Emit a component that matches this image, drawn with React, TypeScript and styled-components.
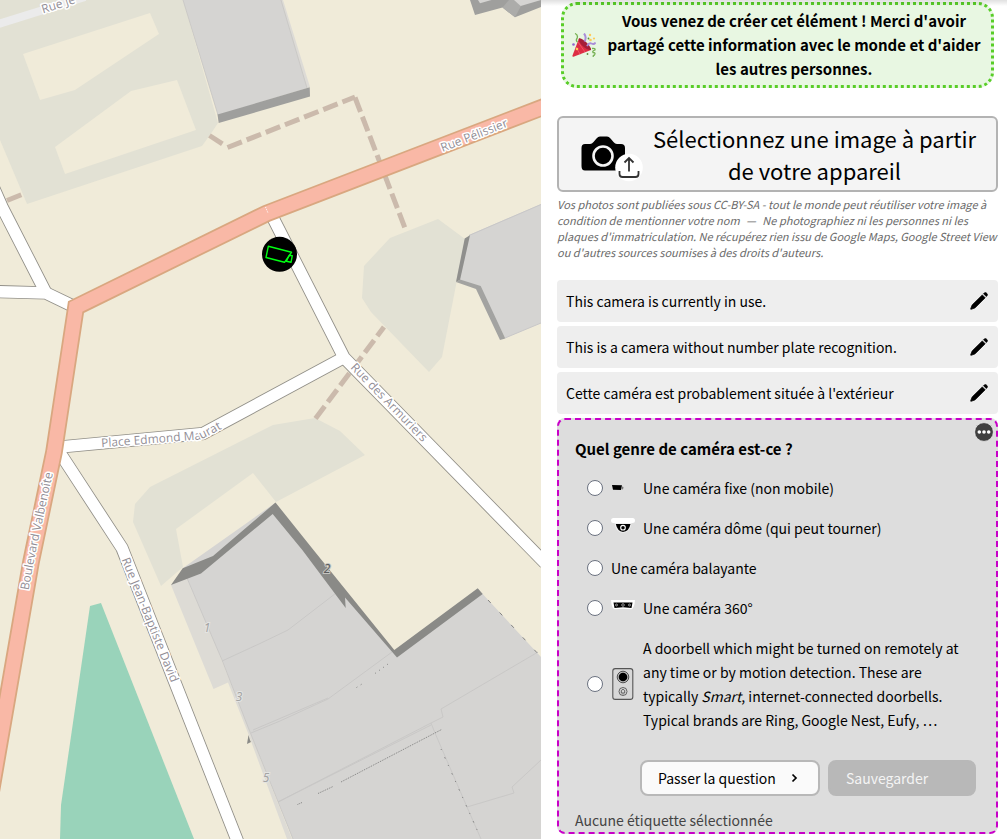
import React from "react";
import styled, { createGlobalStyle } from "styled-components";

const GlobalStyle = createGlobalStyle`
  *, *::before, *::after { box-sizing: border-box; }
  body {
    margin: 0;
    background: #fff;
    color: #000;
    font-family: "Noto Sans CJK SC", "Noto Sans", sans-serif;
    font-size: 14px;
    line-height: 24px;
  }
  button, input { font: inherit; color: inherit; margin: 0; }
  p, h2, ul { margin: 0; padding: 0; }
`;

const Page = styled.main`
  display: grid;
  grid-template-columns: 541fr 466fr;
  min-height: 100vh;
`;

const MapCanvas = styled.svg`
  display: block;
  width: 100%;
  height: 100%;
  background: #f0ebd9;
`;

const Panel = styled.section`
  position: relative;
  display: flex;
  flex-direction: column;
  min-width: 0;
  padding: 2px 9px 5px 16px;
`;

const HeaderShadow = styled.div`
  position: absolute;
  inset: 0 0 auto 0;
  height: 6px;
  background: linear-gradient(rgba(0, 0, 0, 0.12), rgba(0, 0, 0, 0));
`;

const ThanksBanner = styled.div`
  display: flex;
  align-items: center;
  gap: 8px;
  margin: 0 4px 28px;
  padding: 4px 7px 4px 8px;
  border: 3px dotted #58cd27;
  border-radius: 16px;
  background: #e8f7e2;
  font-size: 15px;
  font-weight: 700;
  text-align: center;
`;

const BannerText = styled.p`
  flex: 1;
`;

const Icon = styled.svg<{ $w: number; $h: number }>`
  flex: none;
  display: block;
  width: ${(p) => p.$w}px;
  height: ${(p) => p.$h}px;
`;

const UploadButton = styled.button`
  display: flex;
  align-items: center;
  padding: 4px 10px 4px 22px;
  border: 2px solid #b3b3b3;
  border-radius: 6px;
  background: #f4f4f4;
  font-size: 22px;
  line-height: 32px;
`;

const UploadLabel = styled.span`
  flex: 1;
`;

const Licence = styled.p`
  margin: 4px -3px 20px 0;
  color: #6a6a6a;
  font-size: 11px;
  line-height: 16px;
  font-style: italic;
`;

const Dash = styled.span`
  margin: 0 4px;
`;

const Answers = styled.ul`
  display: flex;
  flex-direction: column;
  gap: 4px;
  margin-bottom: 4px;
  list-style: none;
`;

const Answer = styled.li`
  display: flex;
  align-items: center;
  justify-content: space-between;
  padding: 9px 10px 9px 9px;
  border-radius: 4px;
  background: #eeeeee;
`;

const IconButton = styled.button`
  display: block;
  padding: 0;
  border: 0;
  background: none;
`;

const QuestionBox = styled.form`
  position: relative;
  display: flex;
  flex-direction: column;
  padding: 17px 16px 0;
  border: 2px dashed #c800c8;
  border-radius: 8px;
  background: #dddddd;
`;

const MenuButton = styled(IconButton)`
  position: absolute;
  top: 2px;
  right: 2px;
`;

const Question = styled.h2`
  margin-bottom: 7px;
  font-size: 15px;
  line-height: 24px;
  font-weight: 700;
`;

const Option = styled.label`
  display: flex;
  align-items: center;
  gap: 8px;
  padding: 8px 4px 8px 12px;
`;

const Radio = styled.input`
  flex: none;
  appearance: none;
  width: 16px;
  height: 16px;
  border: 1px solid #6b7280;
  border-radius: 50%;
  background: #fff;
`;

const Actions = styled.div`
  display: flex;
  justify-content: flex-end;
  gap: 8px;
  margin: 20px 4px 12px;
`;

const ActionButton = styled.button<{ $muted?: boolean }>`
  display: flex;
  align-items: center;
  justify-content: space-between;
  width: ${(p) => (p.$muted ? 148 : 180)}px;
  padding: 4px 16px;
  border: 2px solid #b8b8b8;
  border-radius: 8px;
  background: ${(p) => (p.$muted ? "#b8b8b8" : "#fafafa")};
  color: ${(p) => (p.$muted ? "#f4f4f4" : "#000")};
  white-space: nowrap;
`;

const TagHint = styled.p`
  color: #444;
`;

const StreetLabel = styled.text`
  font-family: "Open Sans", "Noto Sans", sans-serif;
  font-size: 12px;
  fill: #928e96;
  stroke: #fff;
  stroke-width: 3px;
  stroke-linejoin: round;
  paint-order: stroke;
`;

const HouseNumber = styled.text<{ $dark?: boolean }>`
  font-family: "Noto Sans", sans-serif;
  font-size: 12px;
  font-style: italic;
  text-anchor: middle;
  fill: ${(p) => (p.$dark ? "#5c5c5c" : "#a4a4a4")};
  stroke: ${(p) => (p.$dark ? "#c4c4c0" : "#e4e4e2")};
  stroke-width: 2px;
  paint-order: stroke;
`;

const MINOR_ROADS = [
  "M-6 189L2 207L46 293",
  "M-5 291.500L46 293L75 307",
  "M271 214L344 357.500L545 563",
  "M344 357.500L203 433.500L60 447",
  "M60 453L122 548L239 845",
];
const MAIN_ROAD = "M546 106L266.500 213.500L76 307L54 452L31 562L-12 810";

const FOOTPATHS = [
  "M209.500 135.500L224 145",
  "M227.500 147.500L355 97",
  "M355 97.500L406.500 232",
  "M7 200.500L22 194.500",
  "M315.500 418.500L384 327",
];

const ROOF_LINES = [
  "M222 661L260 643.500L288 630L340 590",
  "M251 733L280 721L328 699L392 652",
  "M253 730L328 698",
  "M278 802L431 723L443 717L441 709L538 652",
  "M278 802L431 725",
  "M431 723L435 733L467 807L481 839",
  "M467 807L514 793L512 787L541 760",
  "M187 578L222 660L248 727L293 839",
];

function CityMap() {
  return (
    <MapCanvas
      viewBox="0 0 541 839"
      preserveAspectRatio="xMidYMid slice"
      role="img"
      aria-label="Carte"
    >
      <defs>
        <path id="pelissier" d="M442.500 152L530 118" />
        <path id="maurat" d="M101.500 447.200L201 439.500L207 436.500L240 419" />
        <path id="armuriers" d="M350 368L440 460.500" />
        <path id="valbenoite" d="M28.500 590.500L36 551L60 440" />
        <path id="david" d="M121.500 559.500L190 730" />
        <path id="rueje" d="M43 13.500L100 -4.500" />
      </defs>

      <g fill="#e2e1d4">
        <path d="M0 0H183L218 123L212 132L202 146L27 204L0 140Z" />
        <path d="M390 238L438 219L465 239L457 280L442 357L429 372L371 312L362 298L364 266Z" />
        <path d="M273 425L315 418L340 431L365 455L276 502L253 473L176 529L183 567L161 586L133 522L135 504L150 487Z" />
      </g>
      <g fill="#f0ebd9">
        <path d="M23 54L150 13L159 34L75 90L40 100Z" />
        <path d="M55 147L131 91L177 80L196 130L65 174Z" />
      </g>
      <path d="M90 606L101 603L194 839H60L61 805Z" fill="#99d3ba" />
      <path d="M-5 25L85 -3" stroke="#ebebeb" strokeWidth="8" fill="none" />

      <g fill="none" stroke="#cbbaac" strokeWidth="5" strokeDasharray="15.400 5.200">
        {FOOTPATHS.map((d) => (
          <path key={d} d={d} />
        ))}
      </g>

      <g fill="none" stroke="#918f88" strokeWidth="13.200">
        {MINOR_ROADS.map((d) => (
          <path key={d} d={d} />
        ))}
      </g>
      <g fill="none" stroke="#fff" strokeWidth="11.500">
        {MINOR_ROADS.map((d) => (
          <path key={d} d={d} />
        ))}
      </g>
      <path d={MAIN_ROAD} fill="none" stroke="#d9a780" strokeWidth="17.600" />
      <path d={MAIN_ROAD} fill="none" stroke="#f9b8a6" strokeWidth="14" />
      <path d="M265.500 207L268 213" stroke="#fff" strokeDasharray="1 1" />

      <path d="M183 0L218 115L310 87L283 0Z" fill="#dddbd6" />
      <path d="M183 0L218 115L307 88L281 0Z" fill="#d5d4d2" />
      <path d="M183 0L218 115M281 0L307 88" stroke="#c6c5c3" strokeWidth="0.800" />
      <path d="M217.500 114.500L309.700 87.300L310 96.500L218.700 123Z" fill="#9f9f9d" />

      <path d="M470 0L475 15L502.500 7.500L515 17.300L541 7V0Z" fill="#9f9f9d" />
      <path d="M502.500 7.500L509 0H515L521 6L515 17.300Z" fill="#acacaa" />
      <path d="M478 0L480 3.300L491.500 0Z" fill="#d5d4d2" />
      <path d="M514 0L520.700 6L541 0Z" fill="#d5d4d2" />

      <path d="M469 235L541 204V323L505 338L480 287L459 281Z" fill="#d5d4d2" />
      <path d="M469 235.500L541 204.500M505 338L541 323" stroke="#c8c7c8" />
      <path d="M464.700 238.500L470 235.300L460 280L456 282Z" fill="#8f8f8d" />
      <path d="M456 282L460 279.500L480.700 286L505.300 338.500L500 340L476 289Z" fill="#a3a3a1" />

      <path d="M171 585L187 572L292 839H287L280 820L248 733L228 682.500L213.500 689Z" fill="#dddbd5" />
      <path d="M183 568L275 503L394 651L478 589L541 657V839H293L248 727L222 660Z" fill="#d5d4d2" />
      <g fill="none" stroke="#c7c6c5" strokeWidth="0.900">
        {ROOF_LINES.map((d) => (
          <path key={d} d={d} />
        ))}
      </g>
      <path
        d="M171 585L182.700 568.300L213 556L275.500 502.500L313.500 550L394.300 650L477.700 588.300L482.700 594L397 657.500L345 597.500L345.700 608L302.300 550L272.700 514L217.300 560L201 573.500Z"
        fill="#8a8a87"
      />
      <path d="M248.500 735L250 740L251 742L247 744Z" fill="#8a8a87" />
      <g fill="none" stroke="#777" strokeWidth="0.900">
        <path d="M297.500 804.500L302 802.500M318 793.500L333 786.500M341 782L442 729.300" strokeDasharray="1 1" />
        <path d="M356.500 687.500L362 684M375 673.500L388 664" strokeDasharray="1 4" />
        <path d="M441 749L478 832" strokeDasharray="1 8 1.500 7" />
        <path d="M488 600L541 657" strokeDasharray="4 13" />
      </g>

      <StreetLabel><textPath href="#rueje">Rue Je</textPath></StreetLabel>
      <StreetLabel><textPath href="#pelissier">Rue Pélissier</textPath></StreetLabel>
      <StreetLabel><textPath href="#maurat">Place Edmond Maurat</textPath></StreetLabel>
      <StreetLabel><textPath href="#armuriers">Rue des Armuriers</textPath></StreetLabel>
      <StreetLabel><textPath href="#valbenoite">Boulevard Valbenoîte</textPath></StreetLabel>
      <StreetLabel><textPath href="#david">Rue Jean-Baptiste David</textPath></StreetLabel>
      <HouseNumber x="207" y="632">1</HouseNumber>
      <HouseNumber x="239" y="701">3</HouseNumber>
      <HouseNumber x="266" y="782">5</HouseNumber>
      <HouseNumber x="327" y="573" $dark>2</HouseNumber>

      <circle cx="279.500" cy="254.300" r="17.500" />
      <g fill="none" stroke="#00ff12" strokeWidth="1.400" strokeLinejoin="round">
        <path d="M268.300 246.300L291.500 252.300L284.500 262.300L266 257.500Z" />
        <path d="M289.300 255.300L292.300 255.600L291 262.300L286.300 261.300Z" />
      </g>
    </MapCanvas>
  );
}

const PartyIcon = () => (
  <Icon $w={24} $h={24} viewBox="0 0 24 24" aria-hidden="true">
    <path d="M0.500 22.500L7 5.500C10 6 17.500 13 19 17L1.500 23.800Q0 24 0.500 22.500Z" fill="#dd2e44" />
    <path d="M7 5.500C5 8 13 17.500 19 17C20 14 10 4 7 5.500Z" fill="#a61f38" />
    <path d="M4 14L8 21.200M6 9L13 19" stroke="#ee5265" strokeWidth="1" />
    <path d="M3 0.500Q6.500 2 5 5.500Q3.500 7.500 5.500 9" fill="none" stroke="#77b255" strokeWidth="1.300" />
    <path d="M12 0.500Q15 4 12.500 8.500" fill="none" stroke="#aa8dd8" strokeWidth="2" />
    <path d="M15 13Q17 9.500 19.500 10.500Q22 12 23.500 9.500" fill="none" stroke="#aa8dd8" strokeWidth="1.800" />
    <path d="M20 15.500Q23.500 15 23 17Q20 18 21 19.500Q24 19.500 22.500 22Q20.500 22.500 21.500 24" fill="none" stroke="#77b255" strokeWidth="1.300" />
    <g fill="#fdcb58">
      <circle cx="18" cy="2" r="1.200" />
      <circle cx="22" cy="5.500" r="1.100" />
      <circle cx="18.500" cy="7" r="1.300" />
      <circle cx="5" cy="16" r="1.300" />
    </g>
    <circle cx="16.500" cy="5.500" r="0.900" fill="#5c913b" />
    <circle cx="15.500" cy="21" r="0.900" fill="#5c913b" />
    <circle cx="1.500" cy="11.500" r="1.300" fill="#9266cc" />
  </Icon>
);

const CameraUploadIcon = () => (
  <Icon $w={62} $h={56} viewBox="0 -10 62 56" aria-hidden="true">
    <path d="M4 8H9Q11 8 12.500 6L15.500 2.500Q17 0.500 19 0.500H26Q28 0.500 29.500 2.500L32.500 6Q34 8 36 8H40Q44 8 44 12V30Q44 34.500 40 34.500H4Q0.500 34.500 0.500 30V12Q0.500 8 4 8Z" />
    <circle cx="22" cy="20" r="9.500" fill="none" stroke="#f4f4f4" strokeWidth="2.600" />
    <circle cx="48" cy="31.500" r="13.800" fill="#fff" />
    <path d="M48 35.500V22M43.500 26.500L48 22L52.500 26.500M38.500 35V38Q38.500 41 41.500 41H54.500Q57.500 41 57.500 38V35" fill="none" stroke="#333" strokeWidth="1.800" />
  </Icon>
);

const PencilIcon = () => (
  <Icon $w={18} $h={18} viewBox="0 0 18 18" aria-hidden="true">
    <g stroke="#000" strokeWidth="0.700" strokeLinejoin="round">
      <path d="M12.300 2.900L15.200 5.800L5.500 15.400Q5 16 4.300 16.200L1.200 17.300Q0.400 17.400 0.700 16.700L1.800 13.700Q2 13.100 2.500 12.600Z" />
      <path d="M13.500 1.700L14.300 0.900Q15.400 0.100 16.400 1L17 1.600Q17.900 2.600 17.100 3.700L16.300 4.500Z" />
    </g>
  </Icon>
);

const DotsIcon = () => (
  <Icon $w={20} $h={20} viewBox="0 0 20 20" aria-hidden="true">
    <circle cx="10" cy="10" r="9.400" fill="#404040" stroke="#f4f4f4" strokeWidth="0.800" />
    <g fill="#fff">
      <circle cx="5.300" cy="10" r="1.800" />
      <circle cx="10" cy="10" r="1.800" />
      <circle cx="14.700" cy="10" r="1.800" />
    </g>
  </Icon>
);

const ChevronIcon = () => (
  <Icon $w={12} $h={12} viewBox="0 0 12 12" aria-hidden="true">
    <path d="M2.500 2.500L6 6L2.500 9.500" fill="none" stroke="#000" strokeWidth="1.700" />
  </Icon>
);

const FixedCameraIcon = () => (
  <Icon $w={24} $h={24} viewBox="0 0 24 24" aria-hidden="true">
    <path d="M1 9L11 9.200L10 14L2 13.700Z" />
    <path d="M11 10.500L12.500 11L12 13.500L10.500 13Z" fill="#777" />
  </Icon>
);

const DomeCameraIcon = () => (
  <Icon $w={24} $h={24} viewBox="0 0 24 24" aria-hidden="true">
    <rect x="0" y="2" width="24" height="5" rx="2.500" fill="#fff" />
    <path d="M3.500 7H20.500Q19.500 16.500 12 16.800Q4.500 16.500 3.500 7Z" fill="#f2f2f2" />
    <path d="M4.800 8H19.500Q18 15.700 12 15.900Q6.500 15.700 4.800 8Z" />
    <circle cx="12" cy="11.700" r="2.300" fill="none" stroke="#fff" strokeWidth="1.100" />
  </Icon>
);

const PanoramicCameraIcon = () => (
  <Icon $w={24} $h={24} viewBox="0 0 24 24" aria-hidden="true">
    <path d="M0 4H24Q23.500 12 20.500 13.200L12 12.800L3.500 13.200Q0.500 12 0 4Z" fill="#fff" />
    <path d="M2.500 6.500H21.500L20.500 12L12 11.300L3.500 12Z" />
    <g fill="none" stroke="#ccc" strokeWidth="0.700">
      <circle cx="5.500" cy="9" r="1" />
      <circle cx="12" cy="9" r="1.300" />
      <circle cx="18.500" cy="9" r="1" />
    </g>
  </Icon>
);

const DoorbellIcon = () => (
  <Icon $w={24} $h={32} viewBox="0 0 24 32" aria-hidden="true">
    <rect x="1.800" y="0.600" width="20" height="30.800" rx="2.500" fill="#d8d8d8" stroke="#555" strokeWidth="1.100" />
    <circle cx="12" cy="9" r="5.800" fill="#bbb" stroke="#444" strokeWidth="0.900" />
    <circle cx="12" cy="9" r="4.300" />
    <circle cx="12" cy="23.500" r="4" fill="none" stroke="#555" strokeWidth="0.900" />
    <path d="M10.300 25V22.500Q12 20 13.700 22.500V25ZM11.500 26H12.500" fill="none" stroke="#555" strokeWidth="0.900" />
  </Icon>
);

const ANSWERS = [
  "This camera is currently in use.",
  "This is a camera without number plate recognition.",
  "Cette caméra est probablement située à l'extérieur",
];

const OPTIONS: { value: string; icon?: React.ReactNode; label: React.ReactNode }[] = [
  { value: "fixed", icon: <FixedCameraIcon />, label: "Une caméra fixe (non mobile)" },
  { value: "dome", icon: <DomeCameraIcon />, label: "Une caméra dôme (qui peut tourner)" },
  { value: "panning", label: "Une caméra balayante" },
  { value: "panoramic", icon: <PanoramicCameraIcon />, label: "Une caméra 360°" },
  {
    value: "doorbell",
    icon: <DoorbellIcon />,
    label: (
      <>
        A doorbell which might be turned on remotely at any time or by motion detection. These are
        typically <i>Smart</i>, internet-connected doorbells. Typical brands are Ring, Google Nest,
        Eufy, …
      </>
    ),
  },
];

export default function App() {
  return (
    <Page>
      <GlobalStyle />
      <CityMap />
      <Panel>
        <HeaderShadow />
        <ThanksBanner>
          <PartyIcon />
          <BannerText>
            Vous venez de créer cet élément ! Merci d'avoir partagé cette information avec le monde
            et d'aider les autres personnes.
          </BannerText>
        </ThanksBanner>

        <UploadButton type="button">
          <CameraUploadIcon />
          <UploadLabel>Sélectionnez une image à partir de votre appareil</UploadLabel>
        </UploadButton>
        <Licence>
          Vos photos sont publiées sous CC-BY-SA - tout le monde peut réutiliser votre image à
          condition de mentionner votre nom <Dash>—</Dash> Ne photographiez ni les personnes ni les
          plaques d'immatriculation. Ne récupérez rien issu de Google Maps, Google Street View ou
          d'autres sources soumises à des droits d'auteurs.
        </Licence>

        <Answers>
          {ANSWERS.map((text) => (
            <Answer key={text}>
              {text}
              <IconButton type="button" aria-label="Modifier">
                <PencilIcon />
              </IconButton>
            </Answer>
          ))}
        </Answers>

        <QuestionBox>
          <MenuButton type="button" aria-label="Plus d'options">
            <DotsIcon />
          </MenuButton>
          <Question>Quel genre de caméra est-ce ?</Question>
          {OPTIONS.map((option) => (
            <Option key={option.value}>
              <Radio type="radio" name="camera-type" value={option.value} />
              {option.icon}
              <span>{option.label}</span>
            </Option>
          ))}
          <Actions>
            <ActionButton type="button">
              Passer la question
              <ChevronIcon />
            </ActionButton>
            <ActionButton type="submit" $muted disabled>
              Sauvegarder
            </ActionButton>
          </Actions>
          <TagHint>Aucune étiquette sélectionnée</TagHint>
        </QuestionBox>
      </Panel>
    </Page>
  );
}
